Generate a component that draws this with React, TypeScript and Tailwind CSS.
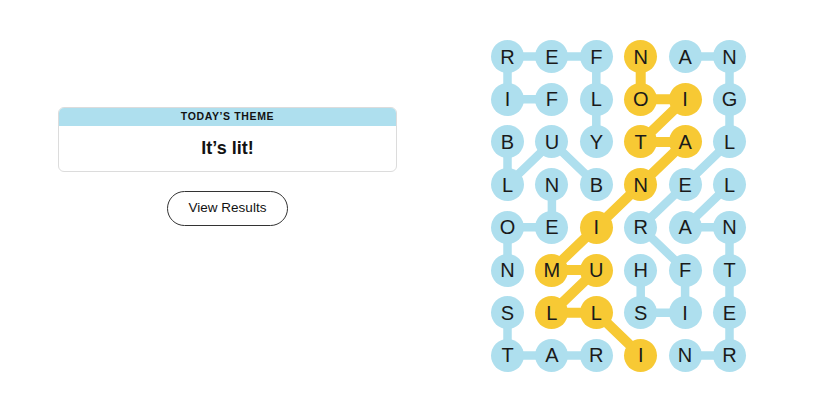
import React from 'react'

type Cell = [number, number]

const letters = [
  'REFNAN',
  'IFLOIG',
  'BUYTAL',
  'LNBNEL',
  'OEIRAN',
  'NMUHFT',
  'SLLSIE',
  'TARINR',
]

// found words, as paths of [row, col]
const blueWords: Cell[][] = [
  // FIREFLY
  [[1, 1], [1, 0], [0, 0], [0, 1], [0, 2], [1, 2], [2, 2]],
  // BULB
  [[3, 2], [2, 1], [3, 0], [2, 0]],
  // NEON
  [[3, 1], [4, 1], [4, 0], [5, 0]],
  // STAR
  [[6, 0], [7, 0], [7, 1], [7, 2]],
  // LANTERN
  [[3, 5], [4, 4], [4, 5], [5, 5], [6, 5], [7, 5], [7, 4]],
  // ANGLERFISH
  [[0, 4], [0, 5], [1, 5], [2, 5], [3, 4], [4, 3], [5, 4], [6, 4], [6, 3], [5, 3]],
]

// spangram: ILLUMINATION
const spangram: Cell[] = [
  [7, 3], [6, 2], [6, 1], [5, 2], [5, 1], [4, 2], [3, 3], [2, 4], [2, 3], [1, 4], [1, 3], [0, 3],
]

const COL = 44.4
const ROW = 42.7
const R = 16.5

const BLUE = '#aedfee'
const GOLD = '#f7c934'

const isGold = (r: number, c: number) =>
  spangram.some(([sr, sc]) => sr === r && sc === c)

const cx = (c: number) => R + c * COL
const cy = (r: number) => R + r * ROW

const WordPath = ({
  path,
  color,
  width,
}: {
  path: Cell[]
  color: string
  width: number
}) => (
  <polyline
    points={path.map(([r, c]) => `${cx(c)},${cy(r)}`).join(' ')}
    fill="none"
    stroke={color}
    strokeWidth={width}
    strokeLinejoin="round"
    strokeLinecap="round"
  />
)

const Board = () => {
  const w = R * 2 + COL * 5
  const h = R * 2 + ROW * 7
  return (
    <div className="relative" style={{ width: w, height: h }}>
      <svg className="absolute inset-0" width={w} height={h}>
        {blueWords.map((p, i) => (
          <WordPath key={i} path={p} color={BLUE} width={8.5} />
        ))}
        <WordPath path={spangram} color={GOLD} width={10} />
      </svg>
      {letters.map((row, r) =>
        row.split('').map((ch, c) => (
          <div
            key={`${r}-${c}`}
            className="absolute w-[33px] h-[33px] rounded-full flex items-center justify-center text-[20px] text-[#1a1a1a] font-['Liberation_Sans',sans-serif]"
            style={{
              left: cx(c) - R,
              top: cy(r) - R,
              backgroundColor: isGold(r, c) ? GOLD : BLUE,
            }}
          >
            {ch}
          </div>
        ))
      )}
    </div>
  )
}

const ThemeCard = () => (
  <div className="w-[339px] rounded-[6px] border border-[#dcdcdc] overflow-hidden">
    <div className="h-[18px] bg-[#aedfee] flex items-center justify-center text-[10.5px] font-bold tracking-[0.06em] text-[#121212]">
      TODAY’S THEME
    </div>
    <div className="h-[45px] flex items-center justify-center text-[18px] font-extrabold text-[#121212]">
      It’s lit!
    </div>
  </div>
)

export default function App() {
  return (
    <div className="w-[825px] h-[413px] bg-white flex font-['Liberation_Sans',Arial,sans-serif]">
      <div className="pl-[58px] pt-[107px] flex flex-col items-center">
        <ThemeCard />
        <button
          type="button"
          className="mt-[19px] w-[121px] h-[35px] rounded-full border border-[#333] text-[13.5px] text-[#121212]"
        >
          View Results
        </button>
      </div>
      <div className="ml-[94px] pt-[40px]">
        <Board />
      </div>
    </div>
  )
}
